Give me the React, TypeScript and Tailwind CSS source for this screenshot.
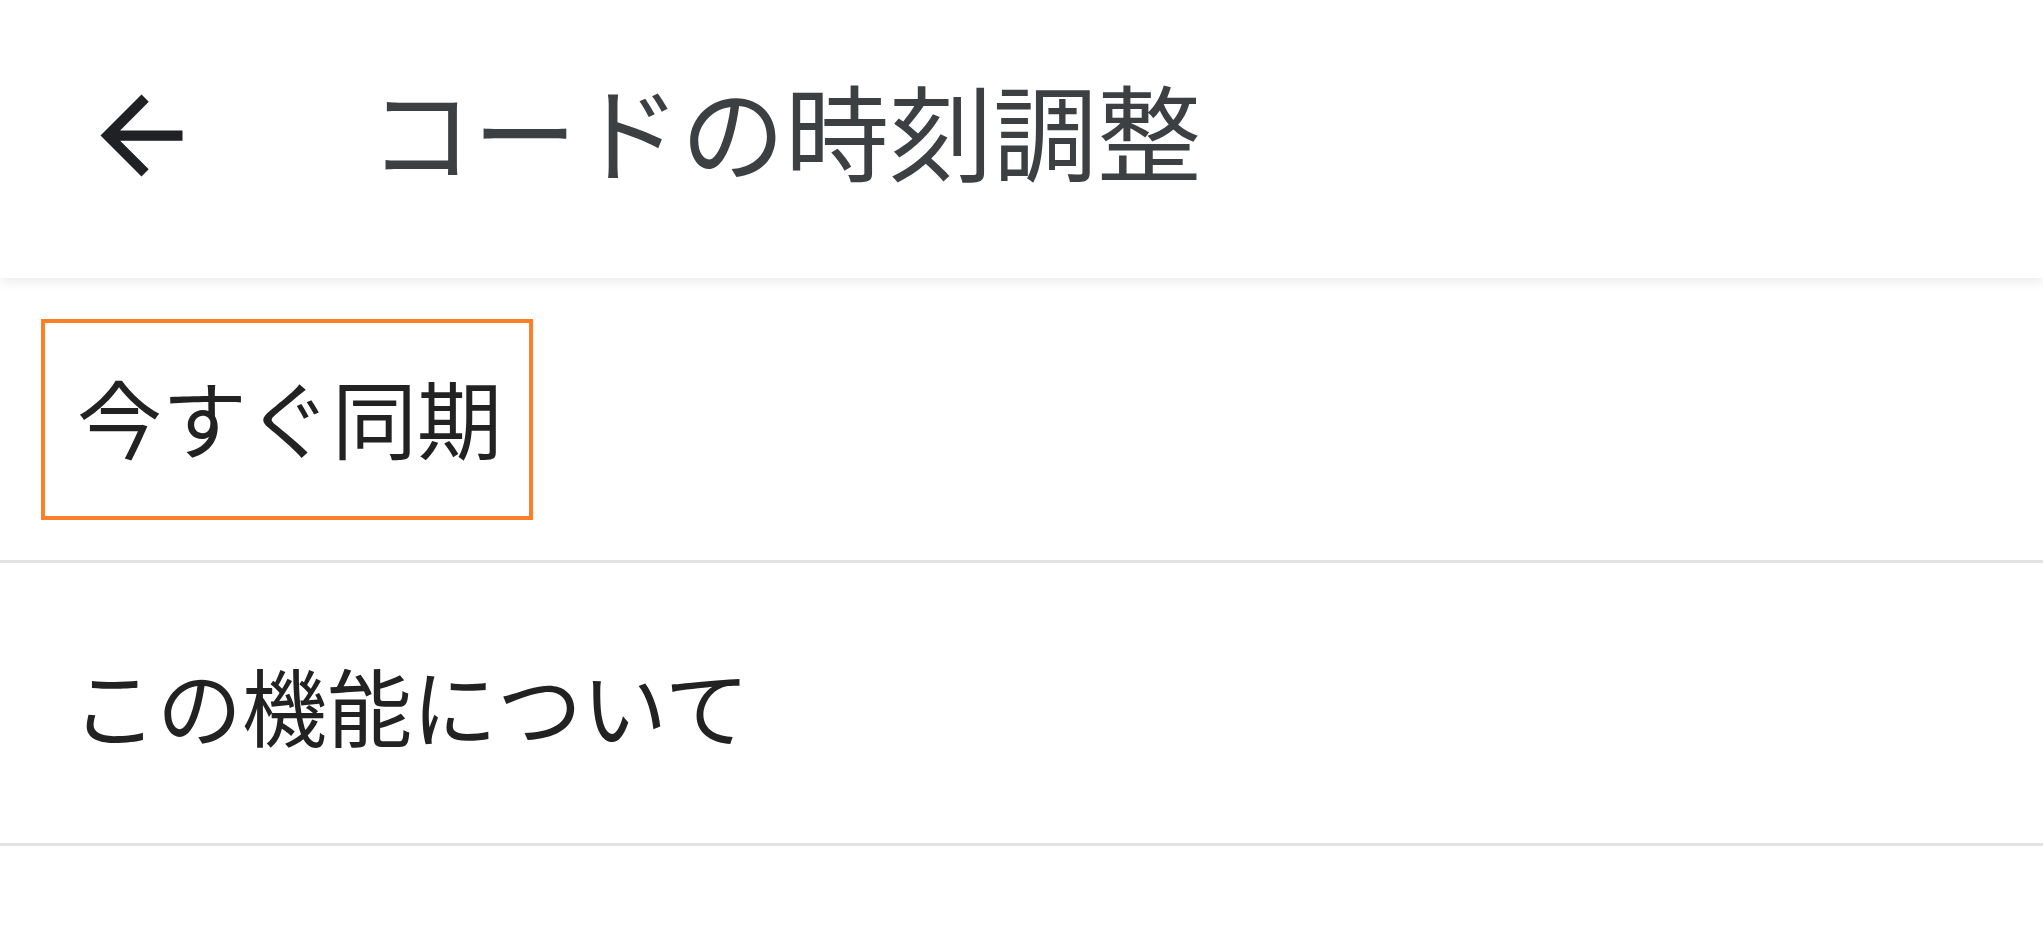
function BackArrow() {
  return (
    <svg width="123" height="123" viewBox="0 0 24 24" fill="#202124">
      <path d="M20 11H7.83l5.59-5.59L12 4l-8 8 8 8 1.41-1.41L7.83 13H20v-2z" />
    </svg>
  )
}

export default function App() {
  return (
    <div
      className="min-h-screen w-full bg-white"
      style={{ fontFamily: "'Noto Sans CJK JP', 'Noto Sans', sans-serif" }}
    >
      {/* App bar */}
      <div className="relative z-10 flex h-[278px] items-center bg-white shadow-[0_3px_12px_rgba(0,0,0,0.09)]">
        <button className="ml-[80px] mt-[-8px] flex items-center justify-center">
          <BackArrow />
        </button>
        <h1 className="ml-[166px] mt-[-20px] text-[104px] leading-none font-normal text-[#3c4043]">
          コードの時刻調整
        </h1>
      </div>

      {/* Settings list */}
      <div className="flex h-[285px] items-center border-b-[3px] border-[#e3e3e3]">
        <div className="ml-[41px] border-4 border-[#fd7f27] pt-[50px] pb-[58px] pl-[32px] pr-[27px]">
          <span className="block text-[85px] leading-none font-normal text-[#222222]">今すぐ同期</span>
        </div>
      </div>
      <div className="flex h-[283px] items-center border-b-[3px] border-[#e3e3e3] pl-[72px]">
        <span className="block text-[85px] leading-none font-normal text-[#222222]">この機能について</span>
      </div>
    </div>
  )
}
